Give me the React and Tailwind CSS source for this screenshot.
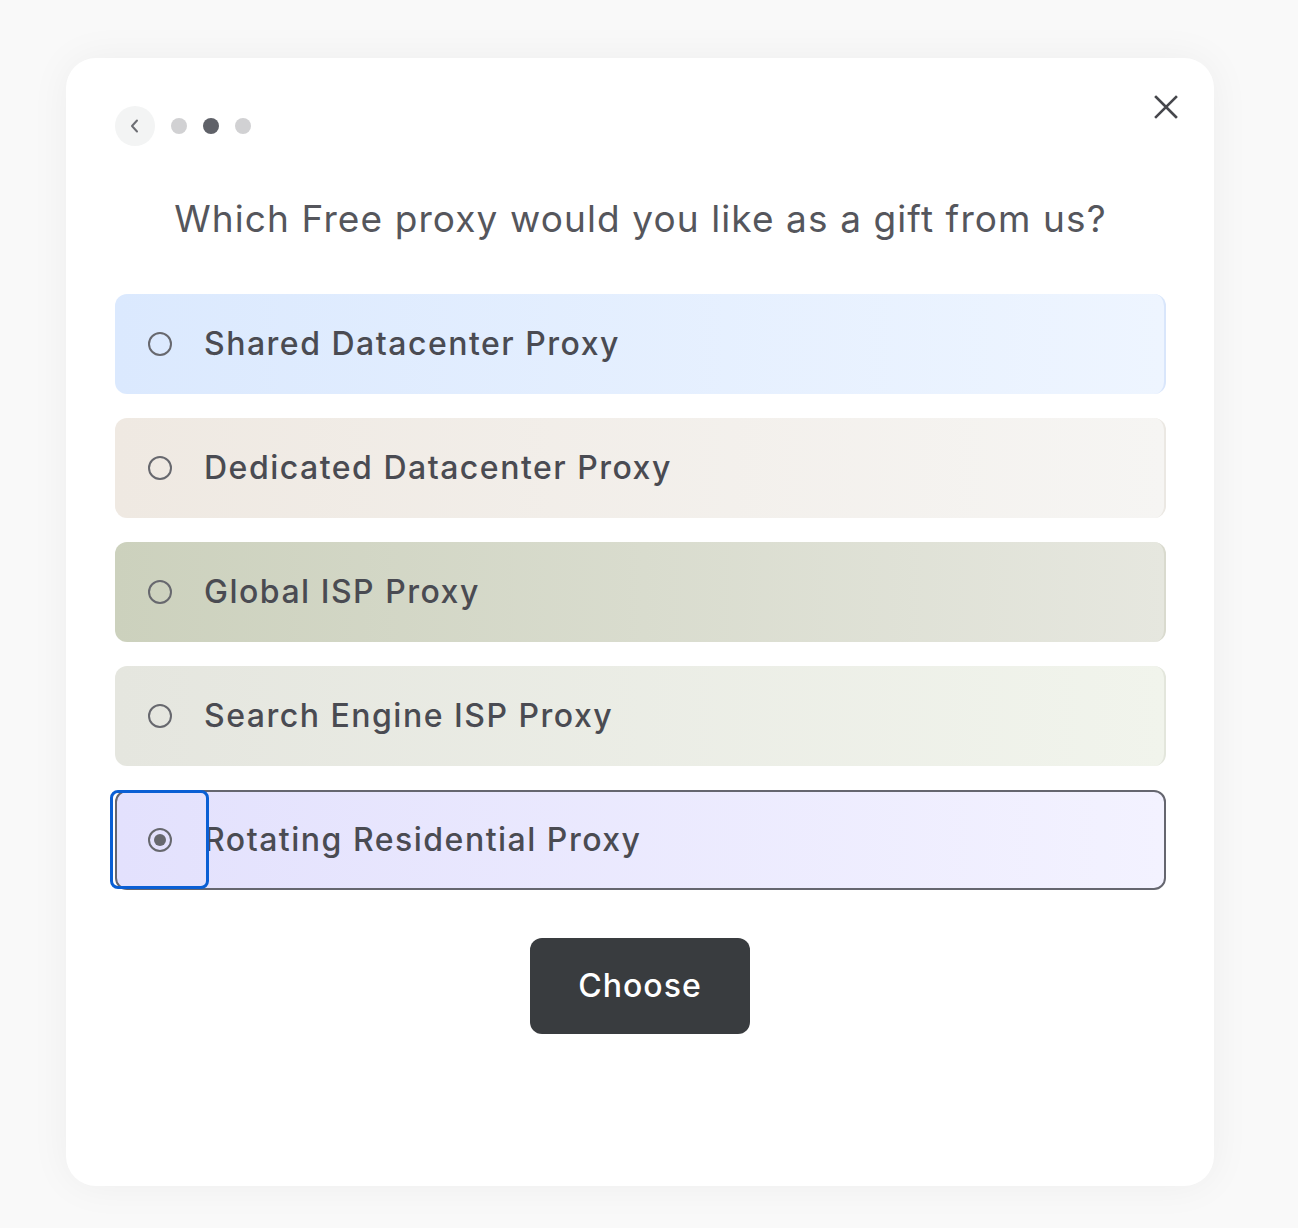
import React from "react";

const options = [
  { label: "Shared Datacenter Proxy", cls: "bg-gradient-to-r from-[#dbe9fe] to-[#eef5ff] border-r-2 border-[#d9e6fb]" },
  { label: "Dedicated Datacenter Proxy", cls: "bg-gradient-to-r from-[#efe9e2] to-[#f6f5f3] border-r-2 border-[#ebe8e3]" },
  { label: "Global ISP Proxy", cls: "bg-gradient-to-r from-[#ccd1bd] to-[#e6e7df] border-r-2 border-[#d9dace]" },
  { label: "Search Engine ISP Proxy", cls: "bg-gradient-to-r from-[#e5e6df] to-[#f1f4ec] border-r-2 border-[#e3e6dc]" },
];

function Radio({ checked }) {
  return (
    <span className="flex h-[24px] w-[24px] shrink-0 items-center justify-center rounded-full border-2 border-[#67686e]">
      {checked && <span className="h-[12px] w-[12px] rounded-full bg-[#67686e]" />}
    </span>
  );
}

export default function App() {
  return (
    <div
      className="min-h-[1228px] w-full bg-[#f9f9f9] pt-[58px] pl-[66px]"
      style={{ fontFamily: "Inter, 'Open Sans', sans-serif" }}
    >
      <div className="relative h-[1128px] w-[1148px] rounded-[30px] bg-white pl-[49px] pr-[48px] pt-[48px] shadow-[0_0_40px_rgba(0,0,0,0.05)]">
        <button className="absolute right-[35px] top-[36px] text-[#46474c]">
          <svg width="26" height="26" viewBox="0 0 26 26" fill="none" stroke="currentColor" strokeWidth="2.6" strokeLinecap="square">
            <path d="M3 3 L23 23 M23 3 L3 23" />
          </svg>
        </button>

        <div className="flex items-center">
          <button className="flex h-[40px] w-[40px] items-center justify-center rounded-full bg-[#f3f4f4] text-[#6d6e73]">
            <svg width="16" height="16" viewBox="0 0 16 16" fill="none" stroke="currentColor" strokeWidth="2" strokeLinecap="round" strokeLinejoin="round">
              <path d="M10 2.5 L5 8 L10 13.5" />
            </svg>
          </button>
          <div className="ml-[16px] flex items-center gap-[16px]">
            <span className="h-[16px] w-[16px] rounded-full bg-[#d1d1d3]" />
            <span className="h-[16px] w-[16px] rounded-full bg-[#5f6168]" />
            <span className="h-[16px] w-[16px] rounded-full bg-[#d1d1d3]" />
          </div>
        </div>

        <h1 className="mt-[51px] text-center text-[37px] font-normal leading-[44px] tracking-[1.1px] text-[#55565c]">
          Which Free proxy would you like as a gift from us?
        </h1>

        <div className="mt-[53px] flex flex-col gap-[24px]">
          {options.map((o) => (
            <div key={o.label} className={`flex h-[100px] items-center rounded-[12px] pl-[33px] ${o.cls}`}>
              <Radio />
              <span className="ml-[32px] text-[32px] font-medium tracking-[1.5px] text-[#4a4b52]">{o.label}</span>
            </div>
          ))}
          <div className="relative flex h-[100px] items-center overflow-visible rounded-[12px] border-2 border-[#65666f] bg-gradient-to-r from-[#e3e1fd] to-[#f3f2ff] pl-[31px]">
            <Radio checked />
            <span className="ml-[32px] text-[32px] font-medium tracking-[1.5px] text-[#4a4b52]">Rotating Residential Proxy</span>
            <span className="pointer-events-none absolute left-[-7px] top-[-2px] h-[99px] w-[99px] rounded-[8px] border-[3px] border-[#0a5fd4]" />
          </div>
        </div>

        <div className="mt-[48px] flex justify-center pr-[1px]">
          <button className="h-[96px] w-[220px] rounded-[12px] bg-[#393c3f] text-[32px] font-medium tracking-[1px] text-white">
            Choose
          </button>
        </div>
      </div>
    </div>
  );
}
